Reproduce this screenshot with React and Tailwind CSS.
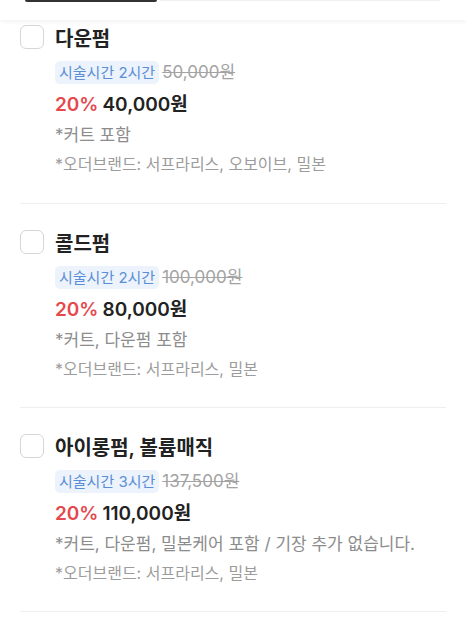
import React from 'react';

const items = [
    {
        title: '다운펌',
        time: '시술시간 2시간',
        original: '50,000원',
        discount: '20%',
        price: '40,000원',
        notes: ['*커트 포함', '*오더브랜드: 서프라리스, 오보이브, 밀본'],
    },
    {
        title: '콜드펌',
        time: '시술시간 2시간',
        original: '100,000원',
        discount: '20%',
        price: '80,000원',
        notes: ['*커트, 다운펌 포함', '*오더브랜드: 서프라리스, 밀본'],
    },
    {
        title: '아이롱펌, 볼륨매직',
        time: '시술시간 3시간',
        original: '137,500원',
        discount: '20%',
        price: '110,000원',
        notes: ['*커트, 다운펌, 밀본케어 포함 / 기장 추가 없습니다.', '*오더브랜드: 서프라리스, 밀본'],
    },
];

function MenuItem({ item, first }) {
    return (
        <div className={`mx-5 flex gap-[11px] border-b border-[#eeeeee] ${first ? 'pt-[5px] pb-[28px]' : 'pt-[26px] pb-[27px]'}`}>
            {/* checkbox */}
            <div className="h-6 w-6 shrink-0 rounded-[6px] border-[1.5px] border-[#d6d6d6] bg-white"></div>

            <div className="flex flex-col">
                <div className="text-[20px] leading-[28px] font-semibold text-[#222222]">{item.title}</div>

                <div className="mt-[8px] flex items-center gap-[3px]">
                    <span className="rounded-[5px] bg-[#edf3fc] px-[4px] text-[15px] leading-[23px] text-[#5a8fd8]">{item.time}</span>
                    <span className="text-[17px] leading-[23px] text-[#a3a3a3] line-through">{item.original}</span>
                </div>

                <div className="mt-[7px] flex items-center gap-[4px] text-[19px] leading-[28px] font-semibold">
                    <span className="text-[#e5484d]">{item.discount}</span>
                    <span className="text-[#222222]">{item.price}</span>
                </div>

                <div className="mt-[4px] text-[17px] leading-[24px] text-[#8c8c8c]">{item.notes[0]}</div>
                <div className="mt-[6px] text-[16px] leading-[22px] text-[#9c9c9c]">{item.notes[1]}</div>
            </div>
        </div>
    );
}

export default function App() {
    return (
        <div
            className="h-[621px] w-[466px] overflow-hidden bg-white"
            style={{ fontFamily: 'Inter, "Noto Sans CJK KR", sans-serif' }}
        >
            {/* header remnant */}
            <div className="relative z-10 h-[20px] bg-white shadow-[0_2px_4px_rgba(0,0,0,0.05)]">
                <div className="flex items-start">
                    <div className="ml-[25px] h-[2px] w-[132px] rounded-b-full bg-[#333333]"></div>
                    <div className="ml-[3px] h-[1px] w-[280px] bg-[#efefef]"></div>
                </div>
            </div>

            <div className="flex flex-col">
                {items.map((item, i) => (
                    <MenuItem key={item.title} item={item} first={i === 0} />
                ))}
            </div>
        </div>
    );
}
